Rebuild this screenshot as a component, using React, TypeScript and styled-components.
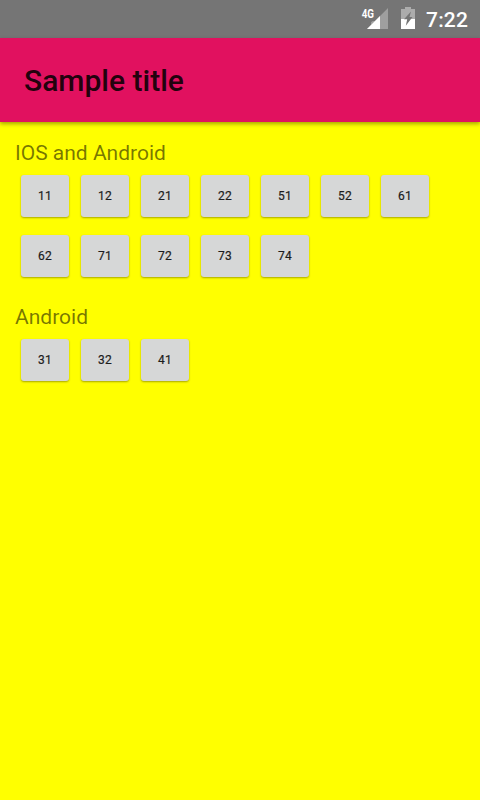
import React from "react";
import styled, { createGlobalStyle } from "styled-components";

const GlobalStyle = createGlobalStyle`
  * { box-sizing: border-box; }
  body { margin: 0; background: #ffff00; font-family: Roboto, sans-serif; overflow: hidden; }
`;

const Screen = styled.div`
  display: flex;
  flex-direction: column;
  width: 480px;
  height: 800px;
  background: #ffff00;
`;

const StatusBar = styled.header`
  display: flex;
  flex: none;
  align-items: flex-start;
  justify-content: flex-end;
  height: 38px;
  padding: 7px 12px 0 0;
  background: #757575;
`;

const SignalIcon = styled.svg`
  width: 28px;
  height: 24px;
  margin-right: 12px;
`;

const BatteryIcon = styled.svg`
  width: 14px;
  height: 22px;
  margin-right: 11px;
`;

const Clock = styled.time`
  width: 42px;
  font-size: 21px;
  font-weight: 500;
  line-height: 26px;
  letter-spacing: 0.2px;
  white-space: nowrap;
  color: #fff;
`;

const AppBar = styled.div`
  display: flex;
  flex: none;
  align-items: center;
  height: 84px;
  padding: 2px 24px 0;
  background: #e1115f;
  box-shadow: 0 2px 4px rgba(0, 0, 0, 0.35);
`;

const Title = styled.h1`
  margin: 0;
  font-size: 30px;
  font-weight: 500;
  line-height: 36px;
  color: rgba(0, 0, 0, 0.87);
`;

const Content = styled.main`
  padding: 16px 15px;
`;

const Section = styled.section`
  margin-bottom: 16px;
`;

const Label = styled.h2`
  margin: 0;
  font-size: 21px;
  font-weight: 400;
  line-height: 30px;
  color: rgba(0, 0, 0, 0.54);
`;

const ButtonGrid = styled.div`
  display: flex;
  flex-wrap: wrap;
  gap: 18px 12px;
  padding: 7px 6px 9px;
`;

const Button = styled.button`
  width: 48px;
  height: 42px;
  padding: 0;
  border: 0;
  border-radius: 3px;
  background: #d6d7d7;
  box-shadow: 0 1px 2px rgba(0, 0, 0, 0.35);
  font: 400 12px/42px Roboto, sans-serif;
  letter-spacing: 0.2px;
  color: #1c1c1c;
  -webkit-text-stroke: 0.2px #1c1c1c;
`;

const NetworkLabel = styled.text`
  font: 700 13px Roboto, sans-serif;
  fill: #fff;
`;

const groups = [
  { name: "IOS and Android", items: [11, 12, 21, 22, 51, 52, 61, 62, 71, 72, 73, 74] },
  { name: "Android", items: [31, 32, 41] },
];

export default function App() {
  return (
    <Screen>
      <GlobalStyle />
      <StatusBar>
        <SignalIcon viewBox="0 0 28 24">
          <path d="M27 1v21H6l4-4V14h4z" fill="#9f9f9f" />
          <path d="M19 9V22H6z" fill="#fff" />
          <path d="M0 0h13v13l-4 3H0z" fill="#757575" />
          <NetworkLabel x="0.7" y="11" textLength="12.3" lengthAdjust="spacingAndGlyphs">4G</NetworkLabel>
        </SignalIcon>
        <BatteryIcon viewBox="0 0 14 22">
          <path d="M4 0h6v2h4v10H0V2h4z" fill="#acacac" />
          <path d="M0 12h14v10H0z" fill="#fff" />
          <path d="M10 4.5L3 12.3h3.2L4.8 18.7L11.5 10H8.5z" fill="#757575" />
        </BatteryIcon>
        <Clock>7:22</Clock>
      </StatusBar>
      <AppBar>
        <Title>Sample title</Title>
      </AppBar>
      <Content>
        {groups.map((group) => (
          <Section key={group.name}>
            <Label>{group.name}</Label>
            <ButtonGrid>
              {group.items.map((item) => (
                <Button key={item}>{item}</Button>
              ))}
            </ButtonGrid>
          </Section>
        ))}
      </Content>
    </Screen>
  );
}
